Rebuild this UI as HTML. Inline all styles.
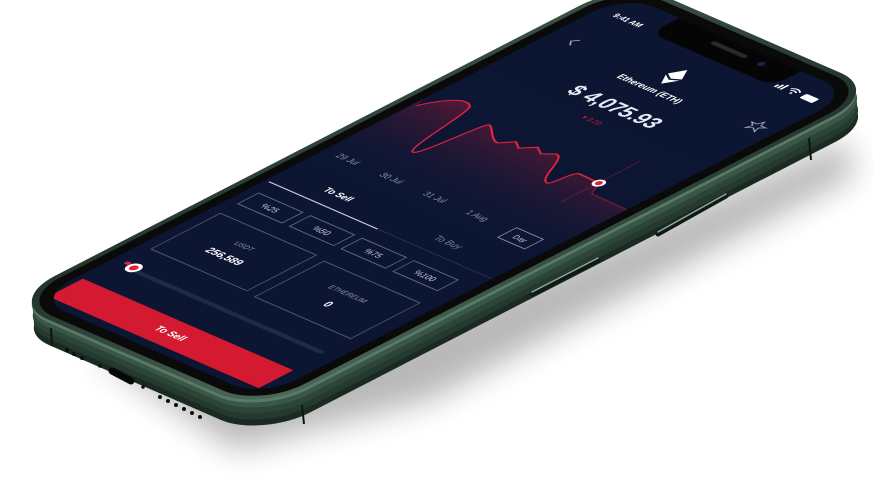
<!DOCTYPE html>
<html><head><meta charset="utf-8"><style>
html,body{margin:0;padding:0;background:#fff;width:873px;height:489px;overflow:hidden}
svg{display:block}
text{font-family:"Liberation Sans",sans-serif}
</style></head><body>
<svg width="873" height="489" viewBox="0 0 873 489" xmlns="http://www.w3.org/2000/svg">
<defs>
<filter id="blur" x="-20%" y="-20%" width="140%" height="140%"><feGaussianBlur stdDeviation="16"/></filter>
<linearGradient id="cf" x1="0" y1="0" x2="0" y2="1">
<stop offset="0" stop-color="#9a1c3a" stop-opacity="0.5"/>
<stop offset="1" stop-color="#0c1633" stop-opacity="0"/>
</linearGradient>
<linearGradient id="rim" x1="0" y1="0" x2="1" y2="1">
<stop offset="0" stop-color="#3c5247"/>
<stop offset="0.5" stop-color="#22342b"/>
<stop offset="1" stop-color="#4d6a5a"/>
</linearGradient>
<clipPath id="scr"><rect x="-6" y="-28" width="390" height="852" rx="50"/></clipPath>
<pattern id="dots" width="6" height="6" patternUnits="userSpaceOnUse"><rect width="6" height="6" fill="#0c1633"/><circle cx="3" cy="3" r="0.6" fill="#16203f"/></pattern>
</defs>

<!-- shadow -->
<polygon points="90,350 235,450 430,400 855,175 845,140 300,380" fill="#000" opacity="0.28" filter="url(#blur)"/>

<!-- extrusion (side) -->
<g transform="translate(2,26)"><g transform="matrix(0.5813 0.2533 -0.6933 0.3571 610 6)">
<rect x="-29" y="-51" width="436" height="898" rx="70" fill="#1a2a22"/></g></g>
<g transform="translate(2,20)"><g transform="matrix(0.5813 0.2533 -0.6933 0.3571 610 6)">
<rect x="-29" y="-51" width="436" height="898" rx="70" fill="#253a2f"/></g></g>
<g transform="translate(1,14)"><g transform="matrix(0.5813 0.2533 -0.6933 0.3571 610 6)">
<rect x="-29" y="-51" width="436" height="898" rx="70" fill="#2c4537"/></g></g>
<g transform="translate(1,8)"><g transform="matrix(0.5813 0.2533 -0.6933 0.3571 610 6)">
<rect x="-29" y="-51" width="436" height="898" rx="70" fill="#3a5646"/></g></g>
<g transform="translate(0,3)"><g transform="matrix(0.5813 0.2533 -0.6933 0.3571 610 6)">
<rect x="-29" y="-51" width="436" height="898" rx="70" fill="#5a7a68"/></g></g>

<g transform="matrix(0.5813 0.2533 -0.6933 0.3571 610 6)">
<rect x="-29" y="-51" width="436" height="898" rx="70" fill="url(#rim)"/>
<rect x="-21" y="-43" width="420" height="882" rx="63" fill="#0a0a0a"/>
<rect x="-6" y="-28" width="390" height="852" rx="50" fill="#0c1633"/>
<g clip-path="url(#scr)">
<rect x="-6" y="180" width="390" height="250" fill="url(#dots)" opacity="0.6"/>
<!-- notch -->
<rect x="86" y="-60" width="210" height="74" rx="20" fill="#050505"/>
<rect x="160" y="-16" width="60" height="7" rx="3.5" fill="#26292e"/>
<circle cx="246" cy="-12" r="5" fill="#1a2040"/>
<!-- status -->
<text x="20" y="14" font-size="12" font-weight="bold" fill="#fff">9:41 AM</text>
<rect x="298" y="8" width="3" height="6" fill="#fff"/><rect x="303" y="5" width="3" height="9" fill="#fff"/><rect x="308" y="2" width="3" height="12" fill="#fff"/>
<path d="M318 6 q8 -7 16 0 M321 9 q5 -4 10 0" stroke="#fff" stroke-width="2" fill="none"/><circle cx="326" cy="12.5" r="1.8" fill="#fff"/>
<rect x="342" y="3" width="22" height="11" rx="2.5" fill="#fff"/>
<!-- nav -->
<path d="M34 72 l-7 7 l7 7" stroke="#9aa3b8" stroke-width="2" fill="none"/>
<polygon points="354,74 357.5,82 366,82 359,87 362,95 354,90 346,95 349,87 342,82 350.5,82" fill="none" stroke="#9aa3b8" stroke-width="1.6"/>
<!-- eth icon -->
<polygon points="188,46 176,64 188,70 200,64" fill="#fff"/>
<polygon points="176,67 188,73 200,67 188,84" fill="#fff"/>
<text x="187" y="104" font-size="14" font-weight="bold" fill="#fff" text-anchor="middle">Ethereum (ETH)</text>
<text x="187" y="160" font-size="31" font-weight="bold" fill="#e6ecf5" text-anchor="middle">$ 4,075.93</text>
<text x="190" y="189" font-size="11" fill="#d41a30" text-anchor="middle">▾ 3.20</text>
<!-- chart -->
<path d="M-6,262 L0,279 C20,240 40,235 52,246 C62,260 68,352 81,352 C92,352 95,258 103,260 C112,262 130,282 143,282 L158,268 L172,276 L188,262 L203,270 L218,260 C235,260 245,310 262,310 C268,310 266,275 275,275 C290,275 300,276 311,276 C316,280 318,297 325,297 L384,298 L384,420 L-6,420 Z" fill="url(#cf)"/>
<path d="M0,279 C20,240 40,235 52,246 C62,260 68,352 81,352 C92,352 95,258 103,260 C112,262 130,282 143,282 L158,268 L172,276 L188,262 L203,270 L218,260 C235,260 245,310 262,310 C268,310 266,275 275,275 C290,275 300,276 311,276" fill="none" stroke="#e0233f" stroke-width="2.5"/>
<path d="M311,276 C316,280 318,297 325,297 L384,298" fill="none" stroke="#7a1a30" stroke-width="2"/>
<line x1="309" y1="215" x2="309" y2="330" stroke="#b3203c" stroke-width="1.2" opacity="0.7"/>
<circle cx="310" cy="276" r="8" fill="#fff"/><circle cx="310" cy="276" r="4.5" fill="#e0233f"/>
<!-- dates -->
<g font-size="13" fill="#8a93a8" text-anchor="middle">
<text x="33" y="410">29 Jul</text><text x="108" y="410">30 Jul</text><text x="183" y="410">31 Jul</text><text x="256" y="410">1 Aug</text>
</g>
<rect x="314" y="398" width="46" height="27" fill="none" stroke="#8a93a8" stroke-width="1.5"/>
<text x="337" y="416" font-size="11" fill="#c8cede" text-anchor="middle">Day</text>
<!-- tabs -->
<text x="88" y="470" font-size="14" font-weight="bold" fill="#fff" text-anchor="middle">To Sell</text>
<text x="277" y="470" font-size="14" fill="#7d869b" text-anchor="middle">To Buy</text>
<line x1="0" y1="492" x2="187" y2="492" stroke="#c9cfdb" stroke-width="2"/>
<line x1="187" y1="492" x2="384" y2="492" stroke="#2a3450" stroke-width="1.5"/>
<!-- pct -->
<g fill="none" stroke="#5d6a85" stroke-width="1.6">
<rect x="11" y="516" width="76" height="30"/><rect x="100" y="516" width="76" height="30"/><rect x="189" y="516" width="76" height="30"/><rect x="278" y="516" width="76" height="30"/>
</g>
<g font-size="13" fill="#c8cede" text-anchor="middle">
<text x="49" y="536">%25</text><text x="138" y="536">%50</text><text x="227" y="536">%75</text><text x="316" y="536">%100</text>
</g>
<!-- boxes -->
<g fill="none" stroke="#4f5b76" stroke-width="1.6">
<rect x="12" y="572" width="165" height="100"/><rect x="195" y="576" width="165" height="100"/>
</g>
<text x="94" y="610" font-size="11" fill="#8a93a8" text-anchor="middle">USDT</text>
<text x="94" y="640" font-size="16" font-weight="bold" fill="#fff" text-anchor="middle">256,589</text>
<text x="277" y="614" font-size="11" fill="#8a93a8" text-anchor="middle">ETHEREUM</text>
<text x="277" y="644" font-size="16" font-weight="bold" fill="#fff" text-anchor="middle">0</text>
<!-- slider -->
<line x1="28" y1="716" x2="357" y2="716" stroke="#1e2b42" stroke-width="7" stroke-linecap="round"/>
<circle cx="30" cy="712" r="10" fill="#fff"/><circle cx="30" cy="712" r="5.5" fill="#e0233f"/>
<rect x="12" y="706" width="8" height="6" rx="2" fill="#e0233f"/>
<!-- button -->
<rect x="2" y="762" width="362" height="50" fill="#d41a30"/>
<text x="183" y="792" font-size="15" font-weight="bold" fill="#fff" text-anchor="middle">To Sell</text>
</g>
</g>

<!-- side buttons -->
<path d="M658,234 L726,196" stroke="#0f1a15" stroke-width="5" stroke-linecap="round"/>
<path d="M658,232 L726,194" stroke="#8fa99a" stroke-width="1.5" stroke-linecap="round"/>
<path d="M532,294 L598,260" stroke="#0f1a15" stroke-width="5" stroke-linecap="round"/>
<path d="M532,292 L598,258" stroke="#8fa99a" stroke-width="1.5" stroke-linecap="round"/>
<path d="M809,138 L811,160" stroke="#0d1511" stroke-width="2"/>
<path d="M51,328 L52,346" stroke="#0d1511" stroke-width="2"/>
<path d="M302,405 L304,424" stroke="#0d1511" stroke-width="2"/>
<!-- bottom holes -->
<g fill="#0a0f0c">
<circle cx="67" cy="350" r="2"/><circle cx="74" cy="354" r="2"/><circle cx="82" cy="358" r="2"/>
<circle cx="100" cy="366" r="1.8"/><circle cx="143" cy="387" r="1.8"/>
<circle cx="160" cy="397" r="2"/><circle cx="168" cy="401" r="2"/><circle cx="176" cy="405" r="2"/><circle cx="184" cy="409" r="2"/><circle cx="192" cy="413" r="2"/><circle cx="200" cy="417" r="2"/>
</g>
<path d="M112,371 L131,381" stroke="#050806" stroke-width="7" stroke-linecap="round"/>
</svg>
</body></html>
